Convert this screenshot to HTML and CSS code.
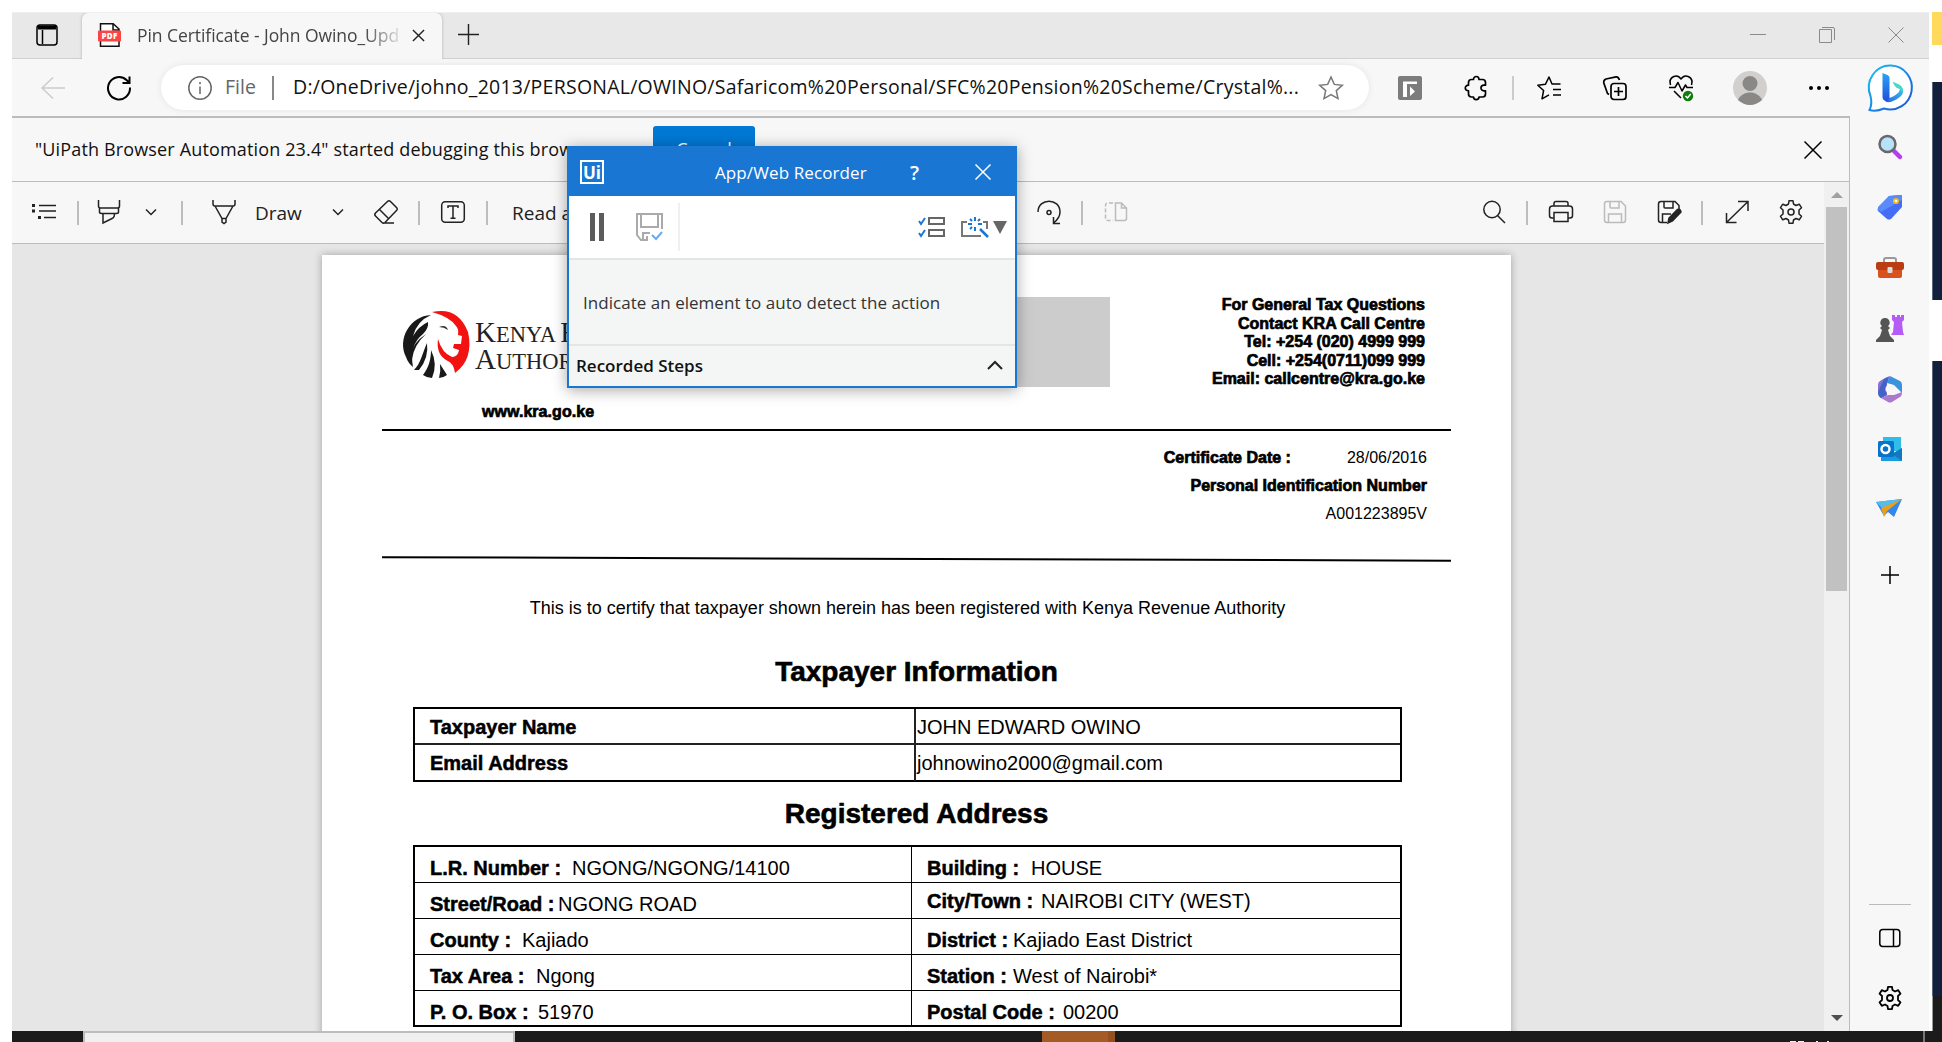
FILE: index.html
```html
<!DOCTYPE html>
<html lang="en">
<head>
<meta charset="utf-8">
<title>Pin Certificate</title>
<link rel="stylesheet" href="styles.css">
</head>
<body>
<div class="desktop">
<div class="window">
  <header class="tabs">
    <svg class="i tabs-menu" viewBox="0 0 24 24"><rect x="2" y="2" width="20" height="20" rx="3"/><path d="M3 5h18M7.5 7v14" /><path d="M3 4.5h18" stroke-width="4"/></svg>
    <div class="tab">
      <svg class="pdf" viewBox="0 0 24 24"><path d="M2.5 8V.8h12.7L21 6v17.2H2.500V18M15 1v6h6" fill="#fff" stroke="#111" stroke-width="1.5"/><rect x="0" y="7.500" width="23" height="11" rx="1" fill="#fb4444"/><text x="11.500" y="16.300" text-anchor="middle" class="pdf-t">PDF</text></svg>
      <span class="tab-title">Pin Certificate - John Owino_Upd</span>
      <svg class="i x-tab" viewBox="0 0 14 14"><path d="M1 1l12 12M13 1L1 13"/></svg>
    </div>
    <svg class="i newtab" viewBox="0 0 22 22"><path d="M11 0v22M0 11h22"/></svg>
    <div class="winctl">
      <svg class="i" viewBox="0 0 16 16"><path d="M0 7.500h16"/></svg>
      <svg class="i" viewBox="0 0 16 16"><path d="M.5 2.500h12v13H.5zM3 .5h11q1.500 0 1.500 1.500v11"/></svg>
      <svg class="i" viewBox="0 0 16 16"><path d="M.5 .5l15 15M15.500 .5l-15 15"/></svg>
    </div>
  </header>
  <div class="address">
    <svg class="i back" viewBox="0 0 24 24"><path d="M24 12H1M12 1.500L1 12l11 10.500"/></svg>
    <svg class="i reload" viewBox="0 0 24 24"><path d="M23 11.500A11 11.200 0 1 1 19.500 4L22.500 7M22.500 .5V7h-7"/></svg>
    <div class="pill">
      <svg class="i info" viewBox="0 0 24 24"><circle cx="12" cy="12" r="11.200"/><path d="M12 10.500V18M12 6v2.300"/></svg>
      <span class="file">File</span>
      <span class="url">D:/OneDrive/johno_2013/PERSONAL/OWINO/Safaricom%20Personal/SFC%20Pension%20Scheme/Crystal%...</span>
      <svg class="i star" viewBox="0 0 24 24"><path d="M12 1l3.300 7.400 8 .9-6 5.300 1.700 8L12 18.500l-7 4.100 1.700-8-6-5.300 8-.9z"/></svg>
    </div>
    <svg class="ext" viewBox="0 0 24 24"><rect width="24" height="24" rx="2" fill="#7c7c7c"/><path d="M5 21V5.500h14V8H9v13zM12 10.500l5 5-5 4.500z" fill="#fff"/></svg>
    <svg class="i puzzle" viewBox="0 0 24 24"><path d="M4.500 6.500q0-3 3-3H9.500c0-4 5.500-4 5.500 0h3.500q3 0 3 3v2.700h-1.500c-4 0-4 5.600 0 5.600h1.500v3.200q0 3-3 3H15c0 3.500-5.500 3.500-5.500 0H7.500q-3 0-3-3V14.800c-4.300 0-4.300-5.600 0-5.600z" stroke-linejoin="round"/></svg>
    <i class="vline"></i>
    <svg class="i fav" viewBox="0 0 24 24"><path d="M23.500 8H15L12 1 8.500 8.200 .8 9.200l5.800 5.300-1.600 8.300 7-4M16 13.500h8M16 19h8" stroke-linejoin="round"/></svg>
    <svg class="i coll" viewBox="0 0 24 24"><rect x="8" y="7.500" width="15" height="16" rx="3"/><path d="M15.500 11v9M11 15.500h9M6 18.500l-1.500-1L.8 7Q.3 4 3 3l10-2.200q2.500-.3 3.500 3.200"/></svg>
    <svg class="i heart" viewBox="0 0 24 26"><path d="M1.500 10C-1 2 8-2 12 4c4-6 13-2 10.500 6M0 12.500h6l3-5 4 8.500 3.500-6 1.500 2.500h6M5 16l7 7" stroke-linejoin="round"/><circle cx="19" cy="21" r="5.200" fill="#107c10" stroke="none"/><path d="M16.500 21l2 2 3.200-4" stroke="#fff"/></svg>
    <svg class="avatar" viewBox="0 0 34 34"><circle cx="17" cy="17" r="17" fill="#d2d0ce"/><circle cx="17" cy="12.500" r="7.500" fill="#8a8886"/><path d="M5 29C9 19 25 19 29 29Q17 39 5 29z" fill="#8a8886"/></svg>
    <svg class="dots" viewBox="0 0 20 4"><circle cx="2" cy="2" r="2"/><circle cx="10" cy="2" r="2"/><circle cx="18" cy="2" r="2"/></svg>
  </div>
  <div class="main">
    <section class="content">
      <div class="infobar">
        <span class="info-text">"UiPath Browser Automation 23.4" started debugging this browser</span>
        <span class="cancel">Cancel</span>
        <svg class="i x-info" viewBox="0 0 18 18"><path d="M.5 .5l17 17M17.500 .5l-17 17"/></svg>
      </div>
      <div class="viewer">
        <div class="pdf-col">
          <div class="pdfbar">
            <svg class="i p1" viewBox="0 0 24 24"><path d="M7 5.500h17M7 11h17M12 17.500h12"/><path d="M0 5.500h3M0 11h3M6 17.500h3" stroke-width="3"/></svg>
            <i class="vline s1"></i>
            <svg class="i p2" viewBox="0 0 24 24"><path d="M1.500 0v6q0 2 2 2h17q2 0 2-2V0M2.500 8v4q0 1.500 2 1.500h15q2 0 2-1.500V8M6 14v9l10-5q1.500-1 1.500-4"/></svg>
            <svg class="i p3" viewBox="0 0 12 12"><path d="M1 3.500l5 5 5-5"/></svg>
            <i class="vline s2"></i>
            <svg class="i p4" viewBox="0 0 24 24"><path d="M1 0v4q0 2 2 2h18q2 0 2-2V0M3 6l7 12.500h4L21 6M10 18.500v3.500l2 1.500 2-1.500v-3.500"/></svg>
            <span class="draw">Draw</span>
            <svg class="i p5" viewBox="0 0 12 12"><path d="M1 3.500l5 5 5-5"/></svg>
            <svg class="i p6" viewBox="0 0 24 24"><path d="M13.500 1.500Q15 0 16.500 1.500l6 6q1.500 1.500 0 3L11 22.500Q9.500 24 8 22.500l-6.500-6.500q-1.500-1.500 0-3zM5.500 9.500l9 9M9 23h11"/></svg>
            <i class="vline s3"></i>
            <svg class="i p7" viewBox="0 0 24 24"><rect x=".7" y="1.700" width="22.600" height="20.600" rx="3.500"/><path d="M7 8V6h10v2M12 6v12M9.500 18.300h5"/></svg>
            <i class="vline s4"></i>
            <span class="read">Read aloud</span>
            <svg class="i p8" viewBox="0 0 24 24"><path d="M1 12C1-2.500 23-2.500 23 12q0 6-6.500 11M16.500 17v6.500H23" /><circle cx="12" cy="12.500" r="2"/></svg>
            <i class="vline s5"></i>
            <svg class="i p9" viewBox="0 0 24 24"><path d="M9 3H4Q1.500 3 1.500 5.500V18q0 2.500 2.500 2.500h5" stroke-dasharray="4 2"/><path d="M11.500 3h6l5 5v10.500q0 2-2 2h-9zM17.500 3v5h5"/></svg>
            <svg class="i p10" viewBox="0 0 24 24"><circle cx="10" cy="9.500" r="8.200"/><path d="M15.500 15.500l7.500 7.500"/></svg>
            <i class="vline s6"></i>
            <svg class="i p11" viewBox="0 0 24 24"><path d="M5 6V3.500Q5 1.500 7 1.500h10q2 0 2 2V6M5 18H3q-2.500 0-2.500-2.500V9Q.5 6 3.500 6h17q3 0 3 3v6.500Q23.500 18 21 18h-2M5 12.500h14v9H5z"/></svg>
            <svg class="i p12" viewBox="0 0 24 24"><path d="M1.500 4q0-2.500 2.500-2.500h14L22.500 6v14q0 2.500-2.500 2.500H4Q1.500 22.500 1.500 20zM7 2v5q0 1 1 1h8V2M5.500 22v-8h13v8"/></svg>
            <svg class="i p13" viewBox="0 0 24 24"><path d="M10 22.500H4Q1.500 22.500 1.500 20V4q0-2.500 2.500-2.500h14L22 5.500V9M7 2v5q0 1 1 1h8V2M5.500 22v-8H14"/><path d="M11 23l1-5 8.500-8.500q3-1 3.500 2.500L15.500 21z" fill="#222"/></svg>
            <i class="vline s7"></i>
            <svg class="i p14" viewBox="0 0 24 24"><path d="M2 22L22.500 2M13 1.500h10V11M1.500 13v9.500h10"/></svg>
            <svg class="i p15" viewBox="0 0 24 24"><path d="M9.500 4L10 .8h4L14.500 4l2.500 1.500 3.200-1.300 2.300 3.500L20 10v4l2.500 2.300-2.300 3.500-3.200-1.300-2.500 1.500-.5 3.200h-4L9.500 20 7 18.500l-3.200 1.300-2.300-3.500L4 14v-4L1.500 7.700l2.300-3.500L7 5.500z" stroke-linejoin="round"/><circle cx="12" cy="12" r="3"/></svg>
          </div>
          <div class="canvas">
            <article class="page">
              <div class="head">
                <div class="brand">
                  <div class="logo">
                    <svg class="lion" viewBox="0 0 68 70"><path d="M29 5C8 6-5 29 4 47q2 6 7 10Q7 35 21 24q6-6 5-12-9 4-15 14Q15 11 29 5z" fill="#191919"/><path d="M8 47q2-14 16-23-12 11-14 25zM12 60c7-7 8-16 13-27q2 15-8 27zM21 65c6-8 8-16 8-25q7 14 1 28-5 0-9-3zM37 68q2-7 1-14l7 11q-4 3-8 3z" fill="#191919"/><path d="M30 2q26-6 36 20 6 27-13 41Q52 53 44 50q-10-6-8-21 4 14 14 18 6 0 7-7l-6-2 1-4h7l1-8-4-1q1-6-2-9Q48 7 30 2z" fill="#f31212"/><path d="M37 17q7-3 9 3-4-3-9-3z" fill="#333"/></svg>
                    <div class="kra"><div><b>K</b>ENYA <b>R</b></div><div><b>A</b>UTHOR</div></div>
                  </div>
                  <div class="site fat">www.kra.go.ke</div>
                </div>
                <div class="greybox"></div>
                <div class="contact fat">
                  <div>For General Tax Questions</div><div>Contact KRA Call Centre</div><div>Tel: +254 (020) 4999 999</div><div>Cell: +254(0711)099 999</div><div>Email: callcentre@kra.go.ke</div>
                </div>
              </div>
              <div class="cert">
                <div><span class="fat">Certificate Date :</span><span class="date">28/06/2016</span></div>
                <div class="fat">Personal Identification Number</div>
                <div>A001223895V</div>
              </div>
              <svg class="rule2" viewBox="0 0 1069 6"><path d="M0 1.200L1069 4.700" stroke="#000" stroke-width="2"/></svg>
              <p class="certify">This is to certify that taxpayer shown herein has been registered with Kenya Revenue Authority</p>
              <h2 class="h-a">Taxpayer Information</h2>
              <div class="t1">
                <div class="lab">Taxpayer Name</div><div class="val">JOHN EDWARD OWINO</div>
                <div class="lab">Email Address</div><div class="val">johnowino2000@gmail.com</div>
              </div>
              <h2 class="h-b">Registered Address</h2>
              <div class="t2">
                <div><b style="width:142px">L.R. Number :</b>NGONG/NGONG/14100</div><div><b style="width:104px">Building :</b>HOUSE</div>
                <div><b style="width:128px">Street/Road :</b>NGONG ROAD</div><div class="up"><b style="width:114px">City/Town :</b>NAIROBI CITY (WEST)</div>
                <div><b style="width:92px">County :</b>Kajiado</div><div><b style="width:86px">District :</b>Kajiado East District</div>
                <div><b style="width:106px">Tax Area :</b>Ngong</div><div><b style="width:86px">Station :</b>West of Nairobi*</div>
                <div><b style="width:108px">P. O. Box :</b>51970</div><div><b style="width:136px">Postal Code :</b>00200</div>
              </div>
            </article>
          </div>
        </div>
        <div class="scroll"><i class="up-arrow"></i><i class="thumb"></i><i class="down-arrow"></i></div>
      </div>
    </section>
    <aside class="side">
      <svg class="bing" viewBox="0 0 46 48"><defs><linearGradient id="b1" x1="0" y1="0" x2="1" y2="1"><stop stop-color="#17c4f3"/><stop offset="1" stop-color="#1b4fd6"/></linearGradient><linearGradient id="b2" x1="0" y1="0" x2="0" y2="1"><stop stop-color="#2aa4f6"/><stop offset="1" stop-color="#1f50d8"/></linearGradient><linearGradient id="b3" x1="0" y1="1" x2="1" y2="0"><stop stop-color="#2463e0"/><stop offset="1" stop-color="#3fc8f0"/></linearGradient></defs><path d="M23 1.500a21.500 22 0 1 1-7 43Q8 48 1.500 46q3-6 1-14A21.500 22 0 0 1 23 1.500z" fill="#fff" stroke="url(#b1)" stroke-width="2"/><path d="M17 37q3 2.500 8 0 7-3 9.500-7 1.500-5-1.500-8l-2 6q-5 5-10 6z" fill="url(#b3)"/><path d="M14.500 9l5 2q2 1 2 3v20q-2 5-5 2.500-2-1-2-3z" fill="url(#b2)"/><path d="M24.500 17.500l7.500 3.500q3.500 3 2.500 8-1-4-5.500-5-2-1-4.500-6.500z" fill="#48d7c5"/></svg>
      <svg class="s-ic" viewBox="0 0 28 28"><path d="M18 18l6 6" stroke="#b43df0" stroke-width="4.500" stroke-linecap="round"/><circle cx="11.500" cy="11" r="8" fill="#b8e2fa" stroke="#686868" stroke-width="2.500"/></svg>
      <svg class="s-ic" viewBox="0 0 28 28"><path d="M13 3l12-1q1 0 1 1v11L15 26q-2 1-4 0L2 18q-1-2 0-3z" fill="#456cf5"/><path d="M13 3l12-1q1 0 1 1v4L5 19l-3-2q0-2 0-3z" fill="#5a8bfa"/><circle cx="20" cy="8" r="2.200" fill="#fff" stroke="#f3b719" stroke-width="1.800"/></svg>
      <svg class="s-ic" viewBox="0 0 28 28"><path d="M8 9V6q0-2 2-2h8q2 0 2 2v3" fill="none" stroke="#999" stroke-width="2"/><path d="M2 14h24v8q0 2-2 2H4q-2 0-2-2z" fill="#d9511c"/><rect y="8" width="28" height="8" rx="2" fill="#b93c12"/><rect x="11.500" y="13" width="5" height="6" rx="1" fill="#ddd"/></svg>
      <svg class="s-ic" viewBox="0 0 28 28"><path d="M16 1h3v2h2V1h3v2h1V1h3v5l-2 2 1 10 1 3H15l2-3 1-10-2-2z" fill="#b65cf6"/><path d="M9 4a4.500 4.500 0 0 1 3 8l2 2-2 2 2 6 4 4v2H0v-2l4-4 2-6-2-2 2-2A4.500 4.500 0 0 1 9 4z" fill="#555"/></svg>
      <svg class="s-ic" viewBox="0 0 28 28"><path d="M14 1q-4 1-10 5-2 1-2 4v8q0 3 3 5l6-3V8z" fill="#8770d2"/><path d="M11 8l3-7 10 5q2 1 2 4v8l-8-8z" fill="#3a94dc"/><path d="M5 23l7-3h6l8-3q0 4-2 5l-8 5q-2 1-4 0z" fill="#ad79cd"/><path d="M2 17q0 4 3 6l6-3-2-5 4-13-5 2z" fill="#4264c8"/><circle cx="14" cy="14" r="4.500" fill="#f7f7f7"/></svg>
      <svg class="s-ic" viewBox="0 0 28 28"><rect x="7" y="2" width="18" height="14" fill="#30bde9"/><path d="M5 14l11 5 10-6v13H5z" fill="#1b9bdf"/><path d="M26 26L16 19l10-6z" fill="#1478bd"/><rect x="2" y="6" width="16" height="16" rx="1.500" fill="#0873ca"/><circle cx="9.500" cy="14" r="4" fill="none" stroke="#fff" stroke-width="2.500"/></svg>
      <svg class="s-ic" viewBox="0 0 28 28"><path d="M0 7l26-3-8 18-6-5-4 4z" fill="#3287ee"/><path d="M0 7l26-3L6 13z" fill="#54bdec"/><path d="M5 13l21-9L11 16l-3 6z" fill="#eba019"/></svg>
      <svg class="i plus" viewBox="0 0 18 18"><path d="M9 0v18M0 9h18"/></svg>
      <div class="side-foot">
        <svg class="i pane" viewBox="0 0 22 20"><rect x=".8" y="1.500" width="20" height="17" rx="3"/><path d="M14.500 2v16"/></svg>
        <svg class="i gear2" viewBox="0 0 24 24"><path d="M9.500 4L10 .8h4L14.500 4l2.500 1.500 3.200-1.300 2.300 3.500L20 10v4l2.500 2.300-2.300 3.500-3.200-1.300-2.500 1.500-.5 3.200h-4L9.500 20 7 18.500l-3.200 1.300-2.300-3.500L4 14v-4L1.500 7.700l2.300-3.500L7 5.500z" stroke-linejoin="round"/><circle cx="12" cy="12" r="3"/></svg>
      </div>
    </aside>
  </div>
</div>
<div class="strip"><i class="yel"></i><i class="navy1"></i><i class="navy2"></i><i class="dark"></i></div>
</div>
<footer class="taskbar"><i class="task-light"></i><i class="task-app"></i><svg class="clock" viewBox="0 0 40 1"><path d="M0 .5h6M8 .5h6M26 .5h2M37 .5h2" stroke="#eee"/></svg><i class="peek"></i></footer>

<div class="recorder">
  <div class="r-title">
    <svg class="ui" viewBox="0 0 24 24"><rect x="1" y="1" width="22" height="22" fill="none" stroke="#fff" stroke-width="2"/><text x="12" y="18.500" text-anchor="middle">Ui</text></svg>
    <span class="r-name">App/Web Recorder</span><span class="r-q">?</span>
    <svg class="i x-rec" viewBox="0 0 16 16"><path d="M.5 .5l15 15M15.500 .5l-15 15"/></svg>
  </div>
  <div class="r-tools">
    <svg class="pause" viewBox="0 0 14 28"><path d="M0 0h5v28H0zM9 0h5v28H9z" fill="#5c5c5c"/></svg>
    <svg class="i save" viewBox="0 0 27 28"><path d="M26 16V1H1v21l4 5h7M7 27v-7h7M5 1v13h17V1M11 23v4"/><path d="M16 22l4 4 6-7" stroke="#6aabf0" stroke-width="2"/></svg>
    <i class="r-sep"></i>
    <svg class="i steps" viewBox="0 0 27 20"><path d="M11 1h15v6H11zM11 13h15v6H11z"/><path d="M1 4l2 3 4-6M1 16l2 3 4-6" stroke="#1976d2"/></svg>
    <svg class="i wand" viewBox="0 0 28 20"><path d="M6 5H1v14h19M22 5h4v7"/><path d="M19 12l8 8" stroke="#1976d2" stroke-width="2.500"/><path d="M14 0v4M14 10v4M7 7h4M17 7h4M9 2l2 2M19 2l-2 2M9 12l2-2" stroke="#1976d2"/></svg>
    <svg class="tri" viewBox="0 0 14 13"><path d="M0 0h14L7 13z" fill="#666"/></svg>
  </div>
  <div class="r-body">Indicate an element to auto detect the action</div>
  <div class="r-foot"><span>Recorded Steps</span><svg class="i r-chev" viewBox="0 0 16 10"><path d="M1 9l7-7 7 7"/></svg></div>
</div>
</body>
</html>
```
FILE: styles.css
```css
* { box-sizing: border-box; }
body { margin: 0; width: 1942px; height: 1042px; overflow: hidden; background: #fff; font-family: "Open Sans", "Noto Sans", sans-serif; color: #111; display: flex; flex-direction: column; position: relative; }
svg { flex: none; display: block; overflow: visible; }
i { display: block; flex: none; }
span { white-space: nowrap; }
.i { fill: none; stroke: #222; stroke-width: 1.5; width: 24px; height: 24px; }
.vline { width: 2px; height: 24px; background: #bdbdbd; }

.desktop { height: 1031px; flex: none; display: flex; padding: 12px 0 0 12px; }
.window { width: 1917px; display: flex; flex-direction: column; background: #f7f7f7; border-top: 1px solid #eee; }
.tabs { height: 46px; flex: none; display: flex; align-items: center; background: #e8e8e8; border-bottom: 1px solid #d0d0d0; }
.tabs-menu { margin-left: 23px; margin-top: -1px; stroke: #000; }
.tab { margin-left: 23px; width: 360px; height: 46px; align-self: flex-start; display: flex; align-items: center; background: #f7f7f7; border-radius: 6px 6px 0 0; box-shadow: 0 0 3px #aaa; clip-path: inset(0 -4px 0 -4px); padding-bottom: 2px; }
.pdf { width: 24px; height: 24px; margin-left: 16px; }
.pdf-t { font: 800 8px "Open Sans", sans-serif; fill: #fff; letter-spacing: .3px; }
.tab-title { width: 264px; margin-left: 15px; font-size: 17.5px; letter-spacing: -.06px; color: #444; -webkit-mask-image: linear-gradient(90deg, #000 86%, rgba(0,0,0,.1)); mask-image: linear-gradient(90deg, #000 86%, rgba(0,0,0,.1)); }
.x-tab { width: 13px; height: 13px; margin-left: 11px; }
.newtab { width: 21px; height: 21px; margin: -2px 0 0 16px; }
.winctl { margin: -2px 25px 0 auto; display: flex; gap: 53px; }
.winctl .i { width: 16px; height: 16px; stroke: #8a8a8a; stroke-width: 1; }

.address { height: 57px; flex: none; display: flex; align-items: center; width: 1838px; }
.back { margin-left: 29px; stroke: #ccc; }
.reload { margin-left: 42px; stroke: #000; stroke-width: 2; }
.pill { margin-left: 30px; width: 1208px; height: 45px; border-radius: 23px; background: #fff; display: flex; align-items: center; box-shadow: 0 0 6px #e4e4e4; }
.info { margin-left: 27px; stroke: #666; }
.file { margin-left: 13px; width: 49px; height: 24px; line-height: 22px; font-size: 19.500px; color: #666; border-right: 2px solid #888; }
.url { margin-left: 19px; width: 1026px; font-size: 19.500px; letter-spacing: .245px; line-height: 22px; margin-top: -2px; }
.star { stroke: #777; }
.ext { width: 24px; height: 24px; margin-left: 29px; }
.puzzle { margin-left: 42px; stroke: #000; stroke-width: 1.700; }
.address .vline { margin-left: 24px; background: #ccc; }
.fav { margin-left: 23px; stroke: #000; }
.coll { margin-left: 42px; stroke: #000; stroke-width: 1.700; }
.heart { margin-left: 42px; height: 26px; stroke: #000; }
.avatar { margin-left: 40px; width: 34px; height: 34px; }
.dots { margin-left: 42px; width: 20px; height: 4px; }

.main { flex: 1; display: flex; min-height: 0; }
.content { width: 1838px; border-top: 2px solid #bcbcbc; border-right: 1px solid #bcbcbc; display: flex; flex-direction: column; }
.infobar { height: 64px; flex: none; display: flex; align-items: center; border-bottom: 1px solid #bcbcbc; }
.info-text { margin: -2px 0 0 23px; width: 618px; font-size: 18px; letter-spacing: .15px; }
.cancel { width: 102px; height: 47px; line-height: 46px; text-align: center; background: #0078d4; color: #fff; font-size: 18px; border-radius: 3px; }
.x-info { width: 18px; height: 18px; margin-left: auto; margin-right: 27px; stroke: #000; }
.viewer { flex: 1; min-height: 0; display: flex; }
.pdf-col { width: 1812px; display: flex; flex-direction: column; }
.pdfbar { height: 62px; flex: none; display: flex; align-items: center; border-bottom: 1px solid #bcbcbc; font-size: 19px; color: #222; }
.pdfbar svg { margin-top: -1px; }
.p1 { margin-left: 20px; }
.s1 { margin-left: 21px; }
.p2 { margin-left: 18px; }
.p3, .p5 { width: 12px; height: 12px; margin-left: 24px; }
.s2 { margin-left: 24px; }
.p4 { margin-left: 29px; }
.draw { margin-left: 19px; width: 53px; }
.p5 { margin-left: 24px; }
.p6 { margin-left: 30px; }
.s3 { margin-left: 20px; }
.p7 { margin-left: 21px; }
.s4 { margin-left: 21px; }
.read { margin-left: 24px; width: 110px; }
.p8 { margin-left: 415px; }
.s5 { margin-left: 20px; }
.p9 { margin-left: 21px; stroke: #bbb; }
.p10 { margin-left: 354px; }
.s6 { margin-left: 20px; }
.p11 { margin-left: 21px; }
.p12 { margin-left: 30px; stroke: #bbb; }
.p13 { margin-left: 30px; }
.s7 { margin-left: 20px; }
.p14 { margin-left: 22px; }
.p15 { margin-left: 30px; }

.canvas { flex: 1; min-height: 0; background: #e6e6e6; padding: 11px 0 0 310px; overflow: hidden; }
.page { width: 1189px; height: 900px; background: #fff; box-shadow: 0 0 8px rgba(0,0,0,.3); font-family: "Liberation Sans", Arial, sans-serif; color: #000; padding: 0 60px; }
.fat { font-weight: bold; -webkit-text-stroke: .7px #000; }
.head { height: 176px; display: flex; border-bottom: 2px solid #000; }
.brand { width: 264px; padding: 55px 0 0 20px; }
.logo { display: flex; height: 80px; }
.lion { width: 68px; height: 70px; }
.kra { margin-left: 5px; padding-top: 9px; font: 22.500px/27px "Liberation Serif", serif; white-space: nowrap; color: #222; }
.kra b { font-weight: normal; font-size: 29px; }
.kra div { height: 27px; }
.site { margin: 12px 0 0 80px; font-size: 16px; line-height: 20px; letter-spacing: .05px; }
.greybox { margin: 42px 0 0 250px; width: 214px; height: 90px; background: #ccc; }
.contact { margin: 41px 26px 0 auto; text-align: right; font-size: 16px; line-height: 18.600px; }
.cert { height: 125px; padding: 13px 24px 0; text-align: right; font-size: 16px; line-height: 28px; }
.date { display: inline-block; margin-left: 56px; }
.rule2 { width: 1069px; height: 6px; }
.certify { margin: 34px 18px 0 0; text-align: center; font-size: 18px; line-height: 24px; }
h2 { margin: 0; text-align: center; font-size: 28px; line-height: 32px; -webkit-text-stroke: .6px #000; }
.h-a { margin-top: 36px; }
.t1 { margin: 19px 0 0 31px; width: 989px; height: 75px; border: 2px solid #000; display: grid; grid-template-columns: 501px 1fr; grid-template-rows: 36px 36px; font-size: 20px; line-height: 36px; }
.t1 > :nth-child(-n+2) { border-bottom: 2px solid #222; }
.lab { padding-left: 15px; border-right: 2px solid #222; font-weight: bold; -webkit-text-stroke: .5px #000; }
.val { padding-left: 1px; }
.h-b { margin-top: 16px; }
.t2 { margin: 15px 0 0 31px; width: 989px; height: 182px; border: 2px solid #000; display: grid; grid-template-columns: 497px 1fr; grid-template-rows: repeat(4, 36px) 34px; font-size: 20px; line-height: 42px; }
.t2 > div { border-bottom: 1px solid #000; padding-left: 15px; display: flex; white-space: nowrap; }
.t2 > div:nth-child(odd) { border-right: 1px solid #000; }
.t2 > div:nth-child(n+9) { border-bottom: 0; }
.t2 b { flex: none; -webkit-text-stroke: .5px #000; }
.up { line-height: 36px; }

.scroll { width: 25px; background: #f0f0f0; display: flex; flex-direction: column; align-items: center; }
.up-arrow { margin-top: 10px; border: 6px solid transparent; border-top: 0; border-bottom: 6px solid #a0a0a0; }
.thumb { margin-top: 9px; width: 21px; height: 384px; background: #c1c1c1; }
.down-arrow { margin-top: auto; margin-bottom: 10px; border: 6px solid transparent; border-bottom: 0; border-top: 6px solid #505050; }
.side { width: 79px; padding-left: 1px; display: flex; flex-direction: column; align-items: center; margin-top: -52px; }
.bing { width: 46px; height: 48px; margin: 0 0 21px 1px; }
.s-ic { width: 28px; height: 28px; margin-bottom: 32.400px; }
.plus { width: 18px; height: 18px; margin-top: 10px; stroke: #000; }
.side-foot { margin-top: auto; width: 42px; height: 127px; border-top: 1px solid #bbb; display: flex; flex-direction: column; align-items: center; }
.pane { width: 22px; height: 20px; margin-top: 23px; stroke: #000; }
.gear2 { margin-top: 38px; stroke: #000; stroke-width: 1.8; }

.strip { margin-left: 3px; width: 10px; }
.yel { height: 33px; background: #ffd95a; }
.navy1 { margin-top: 37px; height: 218px; background: #12203d; border-left: 1px solid #5b6679; }
.navy2 { margin-top: 61px; height: 635px; background: #12203d; border-left: 1px solid #5b6679; }
.dark { height: 35px; background: #1c1c1c; border-left: 1px solid #999; }
.taskbar { height: 11px; margin-left: 12px; background: #1b1b1b; display: flex; }
.task-light { margin-left: 71px; width: 432px; background: #f0f0f0; border: 2px solid #bdbdbd; border-bottom: 0; }
.task-app { margin-left: 527px; width: 73px; background: #a55b26; border-right: 7px solid #95501f; }
.clock { width: 40px; height: 1px; margin: 10px 0 0 675px; }
.peek { margin-left: 93px; width: 2px; background: #777; }

.recorder { position: absolute; left: 567px; top: 146px; width: 450px; height: 242px; border: 2px solid #1976d2; background: #f4f6f6; box-shadow: 0 2px 14px rgba(0,0,0,.35); display: flex; flex-direction: column; }
.r-title { height: 48px; background: #1976d2; color: #fff; display: flex; align-items: center; font-size: 17px; }
.ui { width: 24px; height: 24px; margin-left: 11px; }
.ui text { font: bold 17px "Open Sans", sans-serif; fill: #fff; }
.r-name { margin-left: 111px; width: 195px; letter-spacing: .1px; }
.r-q { width: 65px; font-size: 20px; font-weight: 600; }
.x-rec { width: 16px; height: 16px; stroke: #fff; }
.r-tools { height: 64px; background: #fff; border-bottom: 2px solid #e3e5e6; display: flex; align-items: center; }
.pause { width: 14px; height: 28px; margin-left: 21px; }
.save { width: 27px; height: 28px; margin-left: 32px; stroke: #aaa; stroke-width: 2; }
.r-sep { width: 2px; height: 48px; background: #f0f0f0; margin-left: 15px; }
.steps { width: 27px; height: 20px; margin-left: 238px; stroke: #666; stroke-width: 2; }
.wand { width: 28px; height: 20px; margin-left: 16px; stroke: #777; stroke-width: 2; }
.tri { width: 14px; height: 13px; margin-left: 4px; }
.r-body { height: 84px; flex: none; padding-left: 14px; line-height: 85px; font-size: 17px; letter-spacing: .03px; color: #333; }
.r-foot { flex: 1; border-top: 2px solid #e3e5e6; display: flex; align-items: center; justify-content: space-between; padding: 0 12px 2px 7px; font-size: 17px; font-weight: 600; }
.r-chev { width: 16px; height: 10px; stroke-width: 2; }
```
